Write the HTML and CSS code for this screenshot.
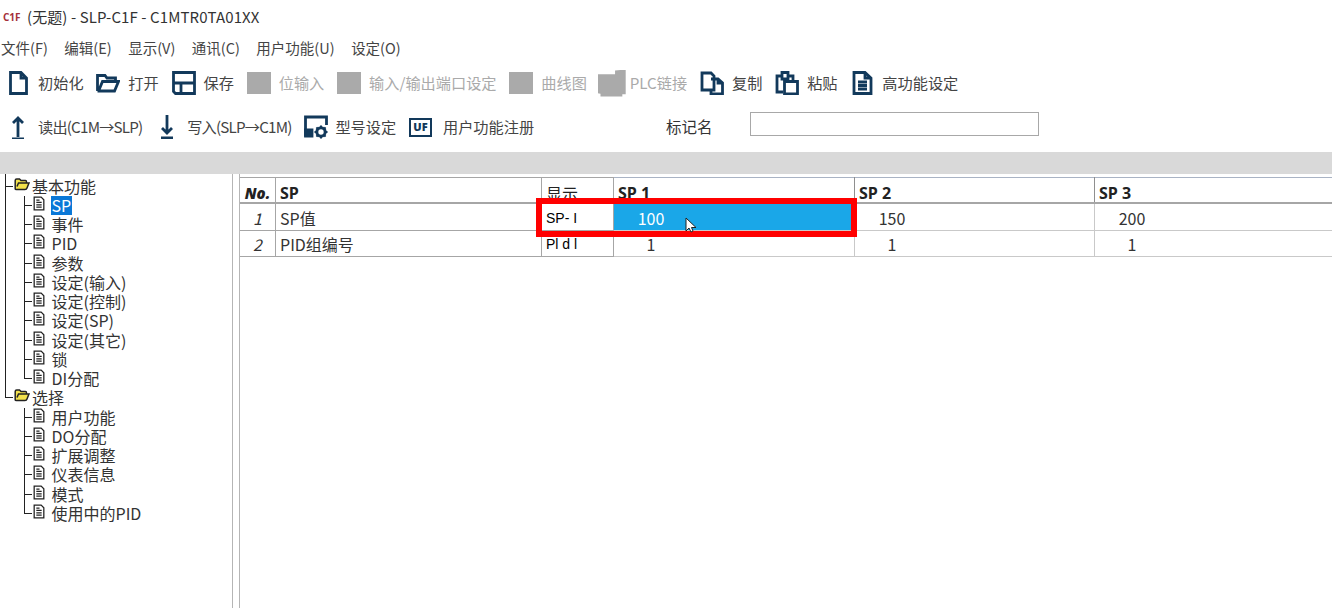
FILE: index.html
```html
<!DOCTYPE html>
<html>

<head>
    <meta charset="utf-8">
    <link rel="stylesheet" href="styles.css">
</head>

<body>
    <svg class="defs">
        <symbol id="doc" viewBox="0 0 11 14">
            <path d="M1 1H7.5L10 3.5V13H1ZM3 6H8M3 8.2H8M3 10.4H8M3 3.8H6"/>
        </symbol>
        <symbol id="folder" viewBox="0 0 16 14">
            <path d="M1.2 12V3.5Q1.2 2 2.7 2H5.5L7 3.5H11.5Q12.5 3.5 12.5 5V6H15L13 11Q12.5 12.5 11 12.5H2.5Q1.2 12.5 1.2 12ZM3 9.5L4.5 6H12.5"/>
        </symbol>
    </svg>

    <div class="titlebar">
        <span class="logo">C1F</span>
        <span>(无题) - SLP-C1F - C1MTR0TA01XX</span>
    </div>

    <div class="menubar">
        <span>文件(F)</span>
        <span>编辑(E)</span>
        <span>显示(V)</span>
        <span>通讯(C)</span>
        <span>用户功能(U)</span>
        <span>设定(O)</span>
    </div>

    <div class="toolbar">
        <div class="tool">
            <svg viewBox="0 0 24 24"><path d="M4.5 1.5H15L20.5 7V22.5H4.5ZM15 1.5V7H20.5"/></svg>
            <span>初始化</span>
        </div>
        <div class="tool">
            <svg viewBox="0 0 24 24"><path d="M1.5 20V4.5H9L11 7H19.5V10.5M1.5 20H18.5L22.5 10.5H6.5L3 19"/></svg>
            <span>打开</span>
        </div>
        <div class="tool">
            <svg viewBox="0 0 24 24"><path d="M1.5 1.5H22.5V22.5H3.5L1.5 20.5ZM1.5 12H22.5M9 12V22.5"/></svg>
            <span>保存</span>
        </div>
        <div class="tool off"><i class="blank"></i><span>位输入</span></div>
        <div class="tool off"><i class="blank"></i><span>输入/输出端口设定</span></div>
        <div class="tool off"><i class="blank"></i><span>曲线图</span></div>
        <div class="tool off"><i class="blank plc"></i><span>PLC链接</span></div>
        <div class="tool">
            <svg viewBox="0 0 24 24"><path d="M2 2H11L14 5V19H2ZM11 8H18L22.5 12V23H11V19M18 8V12H22.5"/></svg>
            <span>复制</span>
        </div>
        <div class="tool">
            <svg viewBox="0 0 24 24"><path d="M8 21H2V5H7V1.5H13V5H18V10M7 5V8H13V5M9.5 10.5H22.5V23H9.5Z"/></svg>
            <span>粘贴</span>
        </div>
        <div class="tool">
            <svg viewBox="0 0 24 24"><path d="M4 1.5H15L21 7V22.5H4ZM15 1.5V7H21M8 11H17M8 14.5H17M8 18H17"/></svg>
            <span>高功能设定</span>
        </div>
    </div>

    <div class="toolbar">
        <div class="tool">
            <svg viewBox="0 0 24 24"><path d="M12 22V3M7 8L12 3L17 8M6 24H18"/></svg>
            <span class="squeeze">读出(C1M→SLP)</span>
        </div>
        <div class="tool">
            <svg viewBox="0 0 24 24"><path d="M12 0V18M7 13L12 18L17 13M6 23H18"/></svg>
            <span class="squeeze">写入(SLP→C1M)</span>
        </div>
        <div class="tool tight">
            <svg viewBox="0 0 24 24">
                <path d="M9 20H1.5V2H22.5V10"/>
                <path class="solid" d="M1.5 15H8V21H1.5Z"/>
                <circle cx="17" cy="17" r="4.2" stroke-width="3"/>
                <path stroke-width="2" d="M17 10.5V12.5M17 21.5V23.5M10.5 17H12.5M21.5 17H23.5M12.4 12.4L13.8 13.8M20.2 20.2L21.6 21.6M12.4 21.6L13.8 20.2M20.2 13.8L21.6 12.4"/>
            </svg>
            <span>型号设定</span>
        </div>
        <div class="tool">
            <b class="uf">UF</b>
            <span>用户功能注册</span>
        </div>
        <label class="tagname">
            <span>标记名</span>
            <input type="text">
        </label>
    </div>

    <div class="graybar"></div>

    <div class="main">
        <div class="tree">
            <ul class="root">
                <li>
                    <div class="node">
                        <svg class="folder"><use href="#folder"/></svg>
                        <span>基本功能</span>
                    </div>
                    <ul class="leaves">
                        <li class="leaf"><svg class="doc"><use href="#doc"/></svg><span class="sel">SP</span></li>
                        <li class="leaf"><svg class="doc"><use href="#doc"/></svg><span>事件</span></li>
                        <li class="leaf"><svg class="doc"><use href="#doc"/></svg><span>PID</span></li>
                        <li class="leaf"><svg class="doc"><use href="#doc"/></svg><span>参数</span></li>
                        <li class="leaf"><svg class="doc"><use href="#doc"/></svg><span>设定(输入)</span></li>
                        <li class="leaf"><svg class="doc"><use href="#doc"/></svg><span>设定(控制)</span></li>
                        <li class="leaf"><svg class="doc"><use href="#doc"/></svg><span>设定(SP)</span></li>
                        <li class="leaf"><svg class="doc"><use href="#doc"/></svg><span>设定(其它)</span></li>
                        <li class="leaf"><svg class="doc"><use href="#doc"/></svg><span>锁</span></li>
                        <li class="leaf"><svg class="doc"><use href="#doc"/></svg><span>DI分配</span></li>
                    </ul>
                </li>
                <li>
                    <div class="node">
                        <svg class="folder"><use href="#folder"/></svg>
                        <span>选择</span>
                    </div>
                    <ul class="leaves">
                        <li class="leaf"><svg class="doc"><use href="#doc"/></svg><span>用户功能</span></li>
                        <li class="leaf"><svg class="doc"><use href="#doc"/></svg><span>DO分配</span></li>
                        <li class="leaf"><svg class="doc"><use href="#doc"/></svg><span>扩展调整</span></li>
                        <li class="leaf"><svg class="doc"><use href="#doc"/></svg><span>仪表信息</span></li>
                        <li class="leaf"><svg class="doc"><use href="#doc"/></svg><span>模式</span></li>
                        <li class="leaf"><svg class="doc"><use href="#doc"/></svg><span>使用中的PID</span></li>
                    </ul>
                </li>
            </ul>
        </div>

        <div class="grid-panel">
            <table class="sp-table">
                <colgroup>
                    <col class="c-no">
                    <col class="c-name">
                    <col class="c-disp">
                    <col class="c-sp">
                    <col class="c-sp2">
                    <col>
                </colgroup>
                <thead>
                    <tr>
                        <th class="no">No.</th>
                        <th>SP</th>
                        <th class="disp-head">显示</th>
                        <th>SP 1</th>
                        <th>SP 2</th>
                        <th>SP 3</th>
                    </tr>
                </thead>
                <tbody>
                    <tr class="row-1">
                        <td class="no">1</td>
                        <td class="name">SP值</td>
                        <td class="disp">SP- I</td>
                        <td class="val active"><span>100</span></td>
                        <td class="val"><span>150</span></td>
                        <td class="val"><span>200</span></td>
                    </tr>
                    <tr class="row-2">
                        <td class="no">2</td>
                        <td class="name">PID组编号</td>
                        <td class="disp">Pl d l</td>
                        <td class="val"><span>1</span></td>
                        <td class="val"><span>1</span></td>
                        <td class="val"><span>1</span></td>
                    </tr>
                </tbody>
            </table>

            <!-- red callout over the first row -->
            <div class="callout"></div>
            <svg class="cursor" viewBox="0 0 12 16"><path d="M1 1V14L4 11L6 15L8 14L6.5 10.5H11Z"/></svg>
        </div>
    </div>
</body>

</html>
```

FILE: styles.css
```css
* {
    box-sizing: border-box;
}

html,
body {
    margin: 0;
    height: 608px;
    overflow: hidden;
}

body {
    display: flex;
    flex-direction: column;
    background-color: #fff;
    color: #333;
    font-family: "Noto Sans CJK SC", "Noto Sans", sans-serif;
}

.defs {
    display: none;
}

.titlebar {
    display: flex;
    align-items: center;
    gap: 7px;
    height: 36px;
    padding: 0 0 3px 3px;
    font-size: 15px;
    letter-spacing: 0.1px;
}

.logo {
    width: 17px;
    color: #a5303a;
    font-family: "Open Sans", sans-serif;
    font-size: 10px;
    font-weight: 700;
    letter-spacing: 0;
}

.menubar {
    display: flex;
    gap: 16.5px;
    align-items: center;
    height: 25px;
    padding: 0 0 3px 1px;
    font-size: 14.5px;
    color: #444;
}

.toolbar {
    display: flex;
    align-items: center;
    gap: 12.8px;
    height: 44px;
    padding-left: 6px;
    font-size: 15.2px;
    color: #444;
}

.tool {
    display: flex;
    align-items: center;
    gap: 8px;
    white-space: nowrap;
}

.tool span {
    padding-bottom: 3px;
}

.tool .squeeze {
    letter-spacing: -0.8px;
}

.tool.tight {
    gap: 7px;
}

.tool svg {
    width: 24px;
    height: 24px;
    fill: none;
    stroke: #12395b;
    stroke-width: 2.8;
}

.tool svg .solid {
    fill: #12395b;
}

.off {
    color: #aaa;
}

.blank {
    display: block;
    width: 24px;
    height: 22px;
    background-color: #aaa;
}

/* the greyed PLC icon is a wider blob with a notch at the top */
.blank.plc {
    width: 28px;
    height: 27px;
    margin: 0 -4px 0 -2px;
    clip-path: polygon(0 18%, 62% 18%, 62% 4%, 100% 0, 100% 92%, 88% 92%, 88% 100%, 10% 100%, 10% 90%, 0 88%);
}

.uf {
    width: 23px;
    height: 19px;
    margin-right: 3px;
    border: 2.5px solid #12395b;
    color: #12395b;
    font-family: "Open Sans", sans-serif;
    font-size: 11px;
    font-weight: 800;
    line-height: 14px;
    text-align: center;
}

.tagname {
    display: flex;
    align-items: center;
    gap: 37.5px;
    margin-left: 119px;
    font-size: 15.5px;
    color: #333;
}

.tagname span {
    padding-bottom: 3px;
}

.tagname input {
    width: 289px;
    height: 24px;
    margin-bottom: 6px;
    border: 1px solid #a8a8a8;
    background-color: #fff;
}

.graybar {
    height: 22px;
    margin-top: 3px;
    background-color: #d9d9d9;
}

.main {
    display: flex;
    flex: 1;
    min-height: 0;
}

/* left tree */
.tree {
    width: 233px;
    border-right: 1px solid #b5b5b5;
    font-size: 16px;
    color: #333;
}

.tree ul {
    margin: 0;
    padding: 0;
    list-style: none;
}

.root {
    position: relative;
    padding-top: 2.5px !important;
}

/* root trunk line */
.root::before {
    content: "";
    position: absolute;
    left: 5px;
    top: 0;
    height: 223px;
    border-left: 1px solid #222;
}

.node,
.leaf {
    position: relative;
    display: flex;
    align-items: center;
    height: 19.25px;
    line-height: 19px;
}

.node {
    gap: 2px;
    padding-left: 14px;
}

.node::before,
.leaf::before {
    content: "";
    position: absolute;
    top: 9px;
    width: 8px;
    border-top: 1px solid #222;
}

.node::before {
    left: 5px;
}

.leaf {
    gap: 6.5px;
    padding-left: 33px;
}

.leaf::before {
    left: 24px;
}

.leaves {
    position: relative;
}

.leaves::before {
    content: "";
    position: absolute;
    left: 24px;
    top: 0;
    bottom: 10px;
    border-left: 1px solid #222;
}

.folder {
    flex: none;
    width: 16px;
    height: 14px;
    margin-top: -5px;
    fill: #f2e14c;
    stroke: #222;
    stroke-width: 1.5;
}

.doc {
    flex: none;
    width: 12px;
    height: 15px;
    margin-top: -4px;
    fill: #fff;
    stroke: #222;
    stroke-width: 1.2;
}

.sel {
    padding: 0 1px;
    margin: 0 0 0 -1px;
    background-color: #0a78d7;
    color: #fff;
}

/* right grid */
.grid-panel {
    position: relative;
    flex: 1;
    margin-left: 6px;
    padding-top: 3px;
    border-left: 1px solid #b5b5b5;
    overflow: hidden;
}

.sp-table {
    width: 1110px;
    margin-left: -1px;
    table-layout: fixed;
    border-collapse: collapse;
    font-size: 16px;
}

.c-no {
    width: 36px;
}

.c-name {
    width: 266px;
}

.c-disp {
    width: 72px;
}

.c-sp {
    width: 241px;
}

.c-sp2 {
    width: 240px;
}

.sp-table th {
    height: 24px;
    padding: 6px 0 0 4px;
    border: 1px solid #a6a6a6;
    border-width: 1px 1px 2px 1px;
    font-family: "Open Sans", "Noto Sans CJK SC", sans-serif;
    font-size: 16px;
    font-weight: 700;
    line-height: 18px;
    text-align: left;
    color: #222;
}

.sp-table .disp-head {
    font-family: "Noto Sans CJK SC", sans-serif;
    font-weight: 400;
}

.sp-table th:nth-child(n+4) {
    border-top-color: #a9b3c4;
    border-right-color: #8f8f8f;
}

.sp-table td {
    padding: 0 0 0 4px;
    border: 1px solid #c9c9c9;
    line-height: 18px;
    white-space: nowrap;
}

.row-1 td {
    height: 27px;
    padding-top: 3px;
}

.row-2 td {
    height: 26px;
    padding-top: 2px;
}

.sp-table td.no,
.sp-table td.name,
.sp-table td.disp {
    border-color: #a6a6a6;
}

.sp-table .no {
    padding-left: 0;
    font-style: italic;
    text-align: center;
}

.sp-table th.no {
    padding-left: 0;
    font-weight: 800;
    font-size: 15px;
}

.sp-table .disp {
    padding-left: 4px;
    font-family: "Liberation Sans", sans-serif;
    font-size: 14px;
    color: #000;
}

.val span {
    display: inline-block;
    min-width: 28px;
    margin-left: 19px;
    text-align: center;
}

.active {
    background-color: #1aa7e8;
    color: #fff;
}

.callout {
    position: absolute;
    left: 296px;
    top: 24px;
    width: 321px;
    height: 39px;
    border: 6px solid #f00;
}

.cursor {
    position: absolute;
    left: 445px;
    top: 43px;
    width: 12px;
    height: 16px;
    fill: #fff;
    stroke: #222;
    stroke-width: 1;
}
```
